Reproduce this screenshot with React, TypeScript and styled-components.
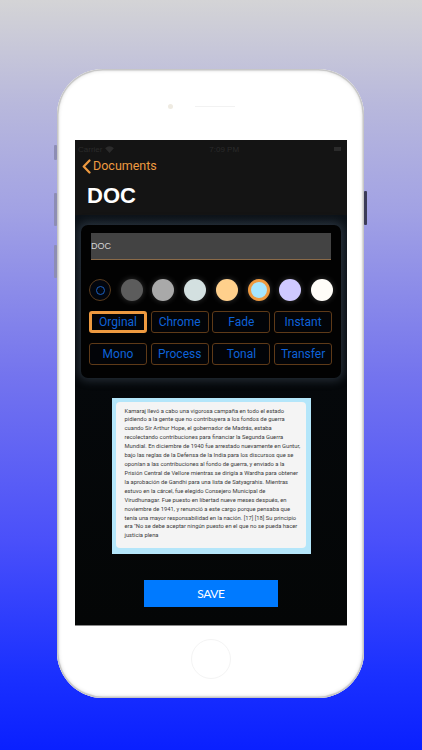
import { createGlobalStyle, styled } from "styled-components";

const FILTERS = ["Orginal", "Chrome", "Fade", "Instant", "Mono", "Process", "Tonal", "Transfer"];
const SWATCHES = ["#5c5c5c", "#a9a9a9", "#d3e0e0", "#ffd08c", "#a6e6ff", "#cfc9ff", "#fffdf8"];

const DOC_TEXT = `Kamaraj llevó a cabo una vigorosa campaña en todo el estado
pidiendo a la gente que no contribuyera a los fondos de guerra
cuando Sir Arthur Hope, el gobernador de Madrás, estaba
recolectando contribuciones para financiar la Segunda Guerra
Mundial. En diciembre de 1940 fue arrestado nuevamente en Guntur,
bajo las reglas de la Defensa de la India para los discursos que se
oponían a las contribuciones al fondo de guerra, y enviado a la
Prisión Central de Vellore mientras se dirigía a Wardha para obtener
la aprobación de Gandhi para una lista de Satyagrahis. Mientras
estuvo en la cárcel, fue elegido Consejero Municipal de
Virudhunagar. Fue puesto en libertad nueve meses después, en
noviembre de 1941, y renunció a este cargo porque pensaba que
tenía una mayor responsabilidad en la nación. [17] [18] Su principio
era "No se debe aceptar ningún puesto en el que no se pueda hacer
justicia plena`;

export default function App() {
	return (
		<Page>
			<GlobalStyle />
			<Phone>
				<SideButton $side="left" $top={76} $height={15} />
				<SideButton $side="left" $top={124} $height={33} />
				<SideButton $side="left" $top={176} $height={33} />
				<SideButton $side="right" $top={122} $height={34} />
				<TopBezel>
					<Camera />
					<Speaker />
				</TopBezel>
				<Screen>
					<Header>
						<StatusBar>
							<StatusSide>
								Carrier
								<svg width="9" height="7" viewBox="0 0 10 8">
									<path d="M5 8 0 2.6C2.900-.6 7.100-.6 10 2.600Z" fill="#2b2b2b" />
								</svg>
							</StatusSide>
							<span>7:09 PM</span>
							<StatusSide>
								<Battery />
							</StatusSide>
						</StatusBar>
						<BackLink>
							<svg width="9" height="15" viewBox="0 0 9 15">
								<path d="M7.500 1.500 1.700 7.500l5.800 6" fill="none" stroke="#ee9a40" strokeWidth="2.200" strokeLinecap="round" strokeLinejoin="round" />
							</svg>
							Documents
						</BackLink>
						<Title>DOC</Title>
					</Header>
					<Body>
						<Panel>
							<NameField>DOC</NameField>
							<Swatches>
								<FirstSwatch>
									<FirstSwatchInner />
								</FirstSwatch>
								{SWATCHES.map((color, i) => (
									<Swatch key={color} $color={color} $selected={i === 4} />
								))}
							</Swatches>
							<Filters>
								{FILTERS.map((name, i) => (
									<FilterButton key={name} $active={i === 0}>
										{name}
									</FilterButton>
								))}
							</Filters>
						</Panel>
						<DocFrame>
							<DocSheet>{DOC_TEXT}</DocSheet>
						</DocFrame>
						<SaveButton>SAVE</SaveButton>
					</Body>
				</Screen>
				<BottomBezel>
					<HomeButton />
				</BottomBezel>
			</Phone>
		</Page>
	);
}

const GlobalStyle = createGlobalStyle`
	html, body {
		margin: 0;
		padding: 0;
		width: 422px;
		height: 750px;
		overflow: hidden;
		font-family: "Liberation Sans", Arial, sans-serif;
	}
`;

const Page = styled.div`
	width: 422px;
	height: 750px;
	box-sizing: border-box;
	padding: 69px 0 0 57px;
	background: linear-gradient(180deg, #d4d4d6 0%, #b8b8dc 14%, #a2a2e4 28%, #7474ee 50%, #4a50fa 72%, #1a30ff 90%, #0a20ff 100%);
`;

const Phone = styled.div`
	position: relative;
	width: 307px;
	height: 629px;
	box-sizing: border-box;
	padding: 0 17px 0 18px;
	display: flex;
	flex-direction: column;
	background: #fff;
	border-radius: 46px;
	box-shadow: inset 0 0 1px 1.500px #c4c4c4, inset 0 0 3px 3px #f2f2f2;
`;

const SideButton = styled.div<{ $side: "left" | "right"; $top: number; $height: number }>`
	position: absolute;
	top: ${(p) => p.$top}px;
	${(p) => (p.$side === "left" ? "left: -3px;" : "right: -3px;")}
	width: 3px;
	height: ${(p) => p.$height}px;
	border-radius: 1px;
	background: ${(p) => (p.$side === "left" ? "#8d8db4" : "#3c3c58")};
`;

const TopBezel = styled.div`
	height: 71px;
	flex: none;
	display: flex;
	align-items: flex-start;
	justify-content: center;
	gap: 22px;
	padding-top: 34px;
	box-sizing: border-box;
`;

const Camera = styled.div`
	width: 5px;
	height: 5px;
	margin-top: 1px;
	border-radius: 50%;
	background: #efebe2;
`;

const Speaker = styled.div`
	width: 40px;
	height: 1px;
	margin: 3px 20px 0 0;
	background: #f2f2f2;
`;

const Screen = styled.div`
	height: 486px;
	flex: none;
	display: flex;
	flex-direction: column;
	background: #000;
	overflow: hidden;
	border-bottom: 1px solid #8a8a8a;
	box-sizing: border-box;
`;

const Header = styled.div`
	height: 75px;
	flex: none;
	background: #141414;
`;

const StatusBar = styled.div`
	height: 12px;
	padding: 3px 3px 0 3px;
	display: flex;
	align-items: center;
	justify-content: space-between;
	color: #2b2b2b;
	font-size: 8px;
`;

const StatusSide = styled.div`
	display: flex;
	align-items: center;
	gap: 3px;
`;

const Battery = styled.div`
	width: 7px;
	height: 4px;
	margin-right: 3px;
	background: #2b2b2b;
`;

const BackLink = styled.div`
	margin-top: 3px;
	padding-left: 7px;
	display: flex;
	align-items: center;
	gap: 2px;
	color: #ee9a40;
	font-family: Roboto, "Liberation Sans", sans-serif;
	font-size: 12.500px;
	line-height: 16px;
`;

const Title = styled.div`
	margin-top: 9px;
	padding-left: 12px;
	color: #fff;
	font-size: 22px;
	font-weight: 700;
	line-height: 26px;
`;

const Body = styled.div`
	flex: 1;
	display: flex;
	flex-direction: column;
	align-items: center;
	padding-top: 10px;
	background: linear-gradient(180deg, #0c1218 0%, #05080b 40%, #040606 100%);
`;

const Panel = styled.div`
	width: 260px;
	height: 153px;
	flex: none;
	box-sizing: border-box;
	padding: 8px 8px 0 8px;
	background: #020202;
	border-radius: 7px;
	box-shadow: 0 0 8px 3px rgba(92, 108, 128, 0.35);
`;

const NameField = styled.div`
	width: 240px;
	height: 27px;
	margin-left: 2px;
	display: flex;
	align-items: center;
	background: #434343;
	border-bottom: 1px solid #8a6a48;
	box-sizing: border-box;
	color: #d4d4d4;
	font-size: 9px;
`;

const Swatches = styled.div`
	margin: 19px 0 0 0;
	display: flex;
	justify-content: space-between;
`;

const FirstSwatch = styled.div`
	width: 22px;
	height: 22px;
	display: flex;
	align-items: center;
	justify-content: center;
	box-sizing: border-box;
	border: 1px solid #5a3c1e;
	border-radius: 50%;
	background: #02060e;
`;

const FirstSwatchInner = styled.div`
	width: 9px;
	height: 9px;
	box-sizing: border-box;
	border: 1.500px solid #1c5fc0;
	border-radius: 50%;
`;

const Swatch = styled.div<{ $color: string; $selected: boolean }>`
	width: 22px;
	height: 22px;
	box-sizing: border-box;
	border-radius: 50%;
	background: ${(p) => p.$color};
	border: ${(p) => (p.$selected ? "3px solid #ee9a40" : "0")};
	box-shadow: 0 0 6px rgba(255, 255, 255, 0.2);
`;

const Filters = styled.div`
	margin-top: 10px;
	display: grid;
	grid-template-columns: repeat(4, 58px);
	column-gap: 3.700px;
	row-gap: 10.500px;
`;

const FilterButton = styled.div<{ $active: boolean }>`
	height: 21.500px;
	display: flex;
	align-items: center;
	justify-content: center;
	box-sizing: border-box;
	border: ${(p) => (p.$active ? "3px solid #ee9a40" : "1px solid #5e3a18")};
	border-radius: 3px;
	color: #0e62d8;
	font-family: Roboto, "Liberation Sans", sans-serif;
	font-size: 12px;
	background: #020408;
`;

const DocFrame = styled.div`
	margin-top: 20px;
	width: 199px;
	height: 156px;
	flex: none;
	box-sizing: border-box;
	padding: 4px 5px 6px 4px;
	background: #b4e6fa;
`;

const DocSheet = styled.div`
	height: 100%;
	box-sizing: border-box;
	padding: 4.500px 0 0 9px;
	background: #f4f4f4;
	border-radius: 4px;
	color: #3a3a3a;
	font-family: Roboto, "Liberation Sans", sans-serif;
	font-size: 5.800px;
	line-height: 8.920px;
	white-space: pre;
`;

const SaveButton = styled.div`
	margin-top: 26px;
	width: 134px;
	height: 27px;
	flex: none;
	display: flex;
	align-items: center;
	justify-content: center;
	background: #007aff;
	color: #fff;
	font-family: Lato, sans-serif;
	font-size: 12px;
	letter-spacing: -0.4px;
`;

const BottomBezel = styled.div`
	flex: 1;
	display: flex;
	justify-content: center;
	padding-top: 13px;
`;

const HomeButton = styled.div`
	width: 40px;
	height: 40px;
	box-sizing: border-box;
	border: 1px solid #f4f4f4;
	border-radius: 50%;
`;
